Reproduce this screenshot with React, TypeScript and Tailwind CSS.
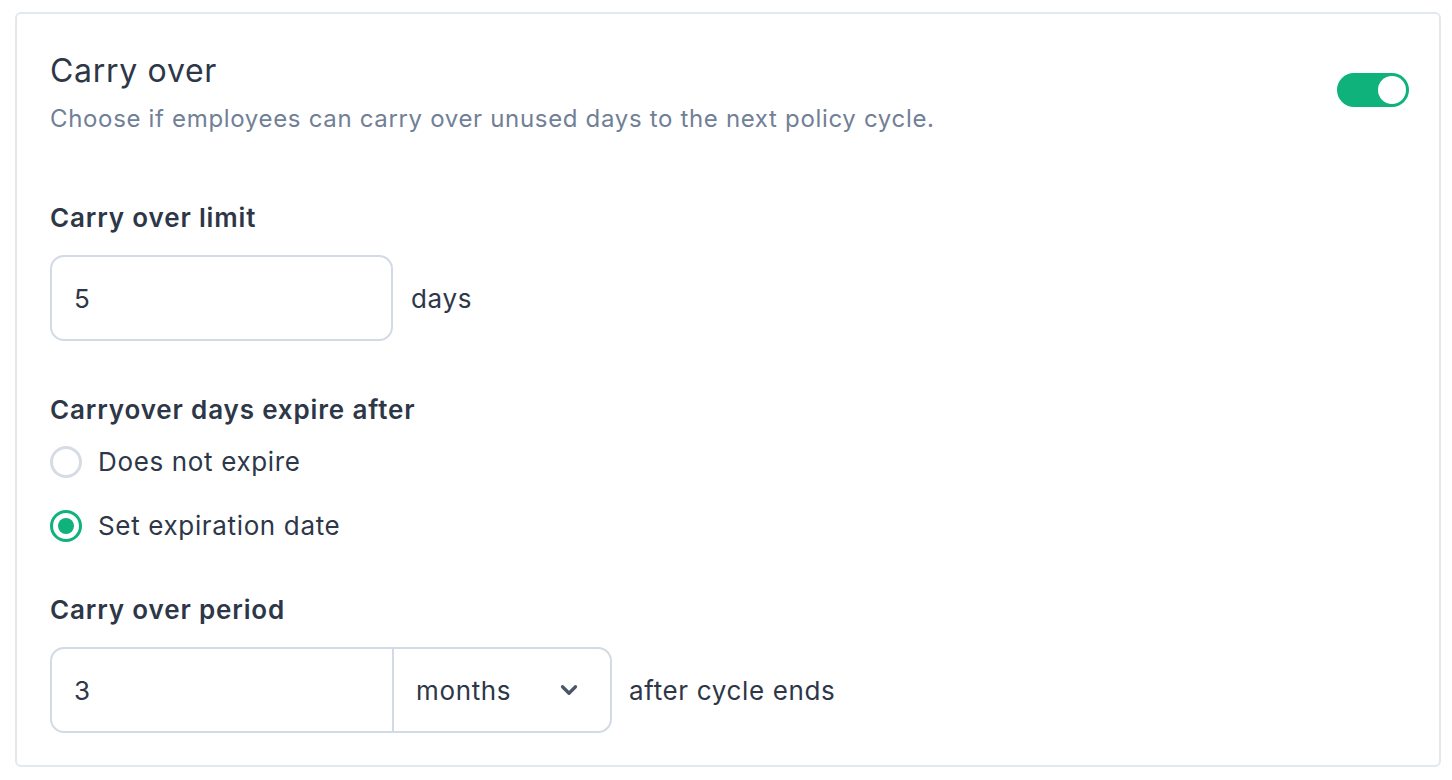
import React, { useState } from 'react';
import { ChevronDown } from 'lucide-react';

function Toggle({ on, onChange }: { on: boolean; onChange: (v: boolean) => void }) {
  return (
    <button
      onClick={() => onChange(!on)}
      className={`mt-[22px] flex h-[34px] w-[72px] shrink-0 items-center rounded-full p-[3px] ${
        on ? 'justify-end bg-[#0fb27a]' : 'justify-start bg-[#cbd5e1]'
      }`}
    >
      <span className="h-[28px] w-[28px] rounded-full bg-white" />
    </button>
  );
}

function Radio({ checked, label, onSelect }: { checked: boolean; label: string; onSelect: () => void }) {
  return (
    <label onClick={onSelect} className="flex h-[40px] cursor-pointer items-center gap-[16px]">
      {checked ? (
        <span className="flex h-[32px] w-[32px] items-center justify-center rounded-full border-[3px] border-[#0fb27a] bg-white">
          <span className="h-[16px] w-[16px] rounded-full bg-[#0fb27a]" />
        </span>
      ) : (
        <span className="h-[32px] w-[32px] rounded-full border-[3px] border-[#d5dce6] bg-white" />
      )}
      <span className="text-[26px] leading-[34px] tracking-[0.65px] text-[#2d3748]">{label}</span>
    </label>
  );
}

export default function App() {
  const [enabled, setEnabled] = useState(true);
  const [expires, setExpires] = useState<'never' | 'date'>('date');

  return (
    <div className="min-h-screen bg-white pl-[15px] pt-[12px] font-['Inter',sans-serif] text-[#2d3748]">
      <div className="w-[1426px] rounded-[6px] border-2 border-[#e3e8ef] pb-[32px] pl-[33px] pr-[30px] pt-[37px]">
        <div className="flex items-start justify-between">
          <div className="flex flex-col gap-[12px]">
            <h2 className="text-[32px] font-normal leading-[40px] tracking-[0.7px] text-[#2d3748]">Carry over</h2>
            <p className="text-[24px] leading-[32px] tracking-[0.67px] text-[#718096]">
              Choose if employees can carry over unused days to the next policy cycle.
            </p>
          </div>
          <Toggle on={enabled} onChange={setEnabled} />
        </div>

        <div className="mt-[66px] flex flex-col tracking-[0.65px]">
          <label className="text-[26px] font-semibold leading-[34px] tracking-[0.85px]">Carry over limit</label>
          <div className="mt-[20px] flex items-center gap-[18px]">
            <div className="flex h-[86px] w-[343px] items-center rounded-[14px] border-2 border-[#d2dae5] px-[22px] text-[26px]">
              5
            </div>
            <span className="text-[26px]">days</span>
          </div>

          <label className="mt-[52px] text-[26px] font-semibold leading-[34px] tracking-[0.85px]">
            Carryover days expire after
          </label>
          <div className="mt-[15px] flex flex-col gap-[24px]">
            <Radio checked={expires === 'never'} label="Does not expire" onSelect={() => setExpires('never')} />
            <Radio checked={expires === 'date'} label="Set expiration date" onSelect={() => setExpires('date')} />
          </div>

          <label className="mt-[47px] text-[26px] font-semibold leading-[34px] tracking-[0.85px]">Carry over period</label>
          <div className="mt-[20px] flex items-center gap-[17px]">
            <div className="flex h-[86px] w-[562px] rounded-[14px] border-2 border-[#d2dae5]">
              <div className="flex w-[342px] items-center border-r-2 border-[#d2dae5] px-[22px] text-[26px]">3</div>
              <div className="flex flex-1 items-center justify-between pl-[22px] pr-[28px] text-[26px]">
                <span>months</span>
                <ChevronDown size={26} strokeWidth={3} className="text-[#4a5568]" />
              </div>
            </div>
            <span className="text-[26px]">after cycle ends</span>
          </div>
        </div>
      </div>
    </div>
  );
}
